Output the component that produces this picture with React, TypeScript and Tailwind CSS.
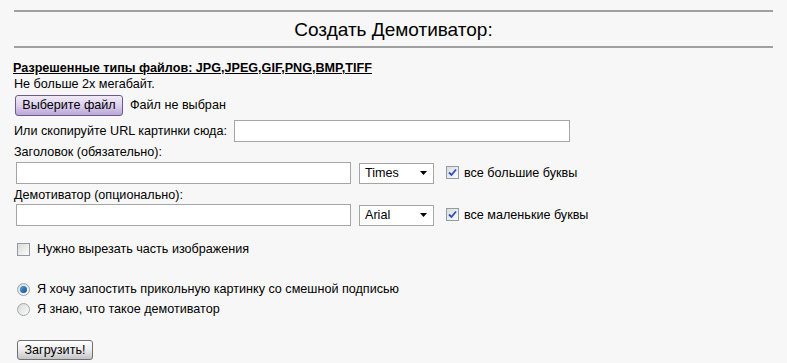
import React from 'react';

const font = { fontFamily: '"Liberation Sans", Arial, sans-serif' };

const Check = ({ checked }: { checked?: boolean }) => (
  <span className="inline-flex h-[13px] w-[13px] shrink-0 items-center justify-center border border-[#8f9ba8] bg-gradient-to-br from-[#dcdcd6] to-[#fbfbfa]">
    {checked && (
      <svg width="9" height="9" viewBox="0 0 9 9">
        <path d="M1 4.5 L3.5 7 L8 1.5" stroke="#2a4ec3" strokeWidth="1.8" fill="none" />
      </svg>
    )}
  </span>
);

const Radio = ({ checked }: { checked?: boolean }) => (
  <span className="inline-flex h-[13px] w-[13px] shrink-0 items-center justify-center rounded-full border border-[#a0a7b0] bg-gradient-to-br from-[#d8d8d4] to-[#fdfdfd]">
    {checked && <span className="h-[7px] w-[7px] rounded-full bg-gradient-to-br from-[#4aa3e8] to-[#17508f]" />}
  </span>
);

const Select = ({ value }: { value: string }) => (
  <div className="flex h-[21px] w-[75px] items-center justify-between border border-[#a5a5a5] bg-white pl-[5px] pr-[6px]">
    <span>{value}</span>
    <svg width="7" height="4" viewBox="0 0 7 4">
      <path d="M0 0 H7 L3.5 4 Z" fill="#000" />
    </svg>
  </div>
);

const TextInput = ({ w }: { w: string }) => (
  <div className={`h-[22px] ${w} shrink-0 border border-[#a5a5a5] bg-white`} />
);

export default function App() {
  return (
    <div className="min-h-[363px] w-[787px] bg-[#f7f7f7] text-[12.6px] leading-[15px] text-black" style={font}>
      <div className="px-[14px] pt-[10px]">
        <div className="h-[2px] bg-[#a0a0a0]" />
        <h1 className="flex h-[34px] items-center justify-center text-[19px]">Создать Демотиватор:</h1>
        <div className="h-[2px] bg-[#a0a0a0]" />
      </div>

      <div className="px-[14px] pt-[13px]">
        <p className="-ml-[1px] font-bold underline">Разрешенные типы файлов: JPG,JPEG,GIF,PNG,BMP,TIFF</p>
        <p className="mt-[1px]">Не больше 2х мегабайт.</p>

        <div className="mt-[3px] flex items-center gap-[7px] pl-[1px]">
          <div className="flex h-[21px] w-[108px] items-center justify-center rounded-[3px] border border-[#6b5a8a] bg-gradient-to-b from-[#f1ebf8] via-[#ddd0ee] to-[#b9a6d6]">
            Выберите файл
          </div>
          <span>Файл не выбран</span>
        </div>

        <div className="mt-[4px] flex items-center gap-[7px]">
          <span>Или скопируйте URL картинки сюда:</span>
          <TextInput w="w-[336px]" />
        </div>

        <p className="mt-[3px]">Заголовок (обязательно):</p>
        <div className="mt-[2px] flex items-center pl-[2px]">
          <TextInput w="w-[335px]" />
          <div className="ml-[8px]"><Select value="Times" /></div>
          <div className="ml-[12px]"><Check checked /></div>
          <span className="ml-[5px]">все большие буквы</span>
        </div>

        <p className="mt-[4px]">Демотиватор (опционально):</p>
        <div className="mt-[1px] flex items-center pl-[2px]">
          <TextInput w="w-[335px]" />
          <div className="ml-[8px]"><Select value="Arial" /></div>
          <div className="ml-[12px]"><Check checked /></div>
          <span className="ml-[5px]">все маленькие буквы</span>
        </div>

        <div className="mt-[16px] flex items-center gap-[7px] pl-[3px]">
          <Check />
          <span>Нужно вырезать часть изображения</span>
        </div>

        <div className="mt-[25px] flex items-center gap-[7px] pl-[3px]">
          <Radio checked />
          <span>Я хочу запостить прикольную картинку со смешной подписью</span>
        </div>
        <div className="mt-[5px] flex items-center gap-[7px] pl-[3px]">
          <Radio />
          <span>Я знаю, что такое демотиватор</span>
        </div>

        <div className="mt-[23px] pl-[3px]">
          <div className="inline-flex h-[20px] w-[76px] items-center justify-center rounded-[3px] border border-[#707070] bg-gradient-to-b from-[#fefefe] via-[#ececec] to-[#c4c4c8]">
            Загрузить!
          </div>
        </div>
      </div>
    </div>
  );
}
